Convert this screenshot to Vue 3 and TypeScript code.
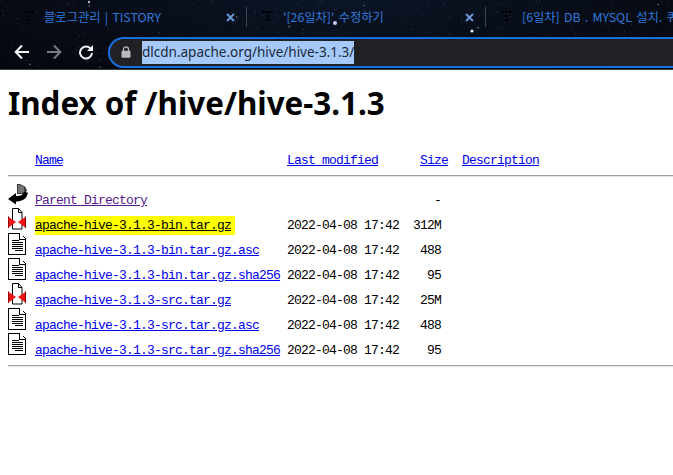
<script setup lang="ts">
interface Star { x: number; y: number; r: number; o: number; c: string }
interface Row { name: string; date: string; size: string; icon: 'back' | 'zip' | 'text'; hl?: boolean; visited?: boolean }

let seed = 4217
const rnd = (): number => {
  seed = (seed * 16807) % 2147483647
  return seed / 2147483647
}
const stars: Star[] = []
for (let i = 0; i < 300; i++) {
  const big = rnd() > 0.95
  stars.push({
    x: rnd() * 673,
    y: rnd() * 70,
    r: big ? 0.8 : 0.5,
    o: big ? 0.5 : 0.1 + rnd() * 0.28,
    c: rnd() > 0.7 ? '#a9c4e8' : '#e8e8e8'
  })
}

const tabs = [
  { title: '블로그관리 | TISTORY', closable: true },
  { title: "'[26일차]' 수정하기", closable: true },
  { title: '[6일차] DB . MYSQL 설치. 쿼리', closable: false }
]

const rows: Row[] = [
  { name: 'Parent Directory', date: '', size: '-', icon: 'back', visited: true },
  { name: 'apache-hive-3.1.3-bin.tar.gz', date: '2022-04-08 17:42', size: '312M', icon: 'zip', hl: true },
  { name: 'apache-hive-3.1.3-bin.tar.gz.asc', date: '2022-04-08 17:42', size: '488', icon: 'text' },
  { name: 'apache-hive-3.1.3-bin.tar.gz.sha256', date: '2022-04-08 17:42', size: '95', icon: 'text' },
  { name: 'apache-hive-3.1.3-src.tar.gz', date: '2022-04-08 17:42', size: '25M', icon: 'zip' },
  { name: 'apache-hive-3.1.3-src.tar.gz.asc', date: '2022-04-08 17:42', size: '488', icon: 'text' },
  { name: 'apache-hive-3.1.3-src.tar.gz.sha256', date: '2022-04-08 17:42', size: '95', icon: 'text' }
]
</script>

<template>
  <div class="page">
    <header class="chrome">
      <svg class="sky" width="673" height="70" viewBox="0 0 673 70" aria-hidden="true">
        <circle v-for="(s, i) in stars" :key="i" :cx="s.x" :cy="s.y" :r="s.r" :fill="s.c" :opacity="s.o" />
        <circle cx="335" cy="23" r="2" fill="#c9c4ff" />
        <circle cx="472" cy="31" r="1.6" fill="#e4efff" />
        <circle cx="89" cy="2" r="1.2" fill="#bbb" />
      </svg>

      <div class="tabs">
        <div v-for="t in tabs" :key="t.title" class="tab">
          <svg class="favicon" width="14" height="12" viewBox="0 0 14 12" aria-hidden="true">
            <g fill="#000">
              <rect x="0" y="0" width="3" height="2" /><rect x="4" y="0" width="3" height="2" /><rect x="8" y="0" width="3" height="2" />
              <rect x="4" y="4" width="3" height="2" /><rect x="4" y="8" width="3" height="2" />
            </g>
          </svg>
          <span class="tab-title">{{ t.title }}</span>
          <svg v-if="t.closable" class="close" width="9" height="9" viewBox="0 0 9 9" aria-hidden="true">
            <path d="M1 1l7 7M8 1l-7 7" stroke="#6c9bd8" stroke-width="1.8" fill="none" />
          </svg>
        </div>
      </div>

      <div class="toolbar">
        <svg class="nav" width="16" height="16" viewBox="0 0 16 16" aria-hidden="true">
          <path d="M15 8H2M8 1.5L1.7 8 8 14.5" stroke="#f1f3f4" stroke-width="2" fill="none" />
        </svg>
        <svg class="nav" width="16" height="16" viewBox="0 0 16 16" aria-hidden="true">
          <path d="M1 8h13M8 1.5L14.3 8 8 14.5" stroke="#767a80" stroke-width="2" fill="none" />
        </svg>
        <svg class="nav" width="16" height="16" viewBox="0 0 16 16" aria-hidden="true">
          <path d="M13 5.200A6 6 0 1 0 14 9" stroke="#f1f3f4" stroke-width="2" fill="none" />
          <path d="M15 1v6H9z" fill="#f1f3f4" />
        </svg>
        <div class="omnibox">
          <svg class="lock" width="10" height="12" viewBox="0 0 10 12" aria-hidden="true">
            <path d="M2.500 5V3.400a2.500 2.500 0 0 1 5 0V5" stroke="#b8babd" stroke-width="1.300" fill="none" />
            <rect x="0.500" y="4.800" width="9" height="7" rx="1" fill="#b8babd" />
          </svg>
          <span class="url">dlcdn.apache.org/hive/hive-3.1.3/</span>
        </div>
      </div>
    </header>

    <main class="content">
      <h1>Index of /hive/hive-3.1.3</h1>

      <div class="listing head">
        <span class="ic"></span>
        <a class="lnk" href="#">Name</a>
        <a class="lnk" href="#">Last modified</a>
        <a class="lnk size" href="#">Size</a>
        <a class="lnk" href="#">Description</a>
      </div>
      <hr />

      <div v-for="r in rows" :key="r.name" class="listing row">
        <span class="ic">
          <svg v-if="r.icon === 'back'" class="back" width="20" height="22" viewBox="0 0 20 22" aria-hidden="true">
            <path d="M9 0h3l5 2.500 2 4-2 3.500H9z" fill="#3c3c3c" />
            <path d="M11 1v8M13 1.500v7.500M15 2.500v6" stroke="#c8c8c8" stroke-width="0.800" />
            <path d="M19.800 8.500C19.500 15 13.500 17.500 8 17.500V20.500L0 15 8 9V12C12 12.500 15 11 16 8z" fill="#000" />
          </svg>
          <svg v-else-if="r.icon === 'zip'" width="20" height="22" viewBox="0 0 20 22" aria-hidden="true">
            <path d="M4.500.5h6l3.500 4v16.500H4.500z" fill="#fff" stroke="#000" />
            <path d="M10.500.5v4h3.500" fill="none" stroke="#000" />
            <path d="M0 8.500L8 14 0 20zM18 8.500L10 14l8 6z" fill="#f01414" />
            <path d="M.5 8.500v11.500M17.500 8.500v11.500" stroke="#8a0000" />
          </svg>
          <svg v-else width="20" height="22" viewBox="0 0 20 22" shape-rendering="crispEdges" aria-hidden="true">
            <path d="M.5.5h11l6 5.500v15.500H.5z" fill="#fff" stroke="#000" />
            <path d="M11.500.5v5.500h6" fill="#fff" stroke="#000" />
            <path d="M4 7h7v1H4zM4 9h11v1H4zM4 11h11v1H4zM4 13h11v1H4zM4 15h11v1H4zM7 17h8v1H7z" fill="#000" />
          </svg>
        </span>
        <span class="name-cell">
          <a class="lnk" :class="{ hl: r.hl, visited: r.visited }" href="#">{{ r.name }}</a>
        </span>
        <span>{{ r.date }}</span>
        <span class="size">{{ r.size }}</span>
        <span></span>
      </div>
      <hr class="end" />
    </main>
  </div>
</template>

<style scoped>
.page {
  width: 673px;
  height: 475px;
  overflow: hidden;
  background: #fff;
}
.chrome {
  position: relative;
  height: 70px;
  background: radial-gradient(ellipse at 50% 0%, #0b1526 0%, #070c16 60%, #04070d 100%);
  border-bottom: 1px solid #3a3b3d;
  box-sizing: border-box;
  font-family: "Noto Sans CJK KR", "Noto Sans", sans-serif;
}
.sky {
  position: absolute;
  left: 0;
  top: 0;
}
.tabs {
  position: relative;
  display: flex;
  height: 34px;
  padding-left: 8px;
}
.tab {
  width: 239px;
  flex: none;
  box-sizing: border-box;
  display: flex;
  align-items: center;
  padding: 0 11px 0 15px;
  border-right: 1px solid #3b4656;
  height: 20px;
  margin-top: 7px;
  position: relative;
}
.tab:last-child {
  border-right: 0;
}
.favicon {
  flex: none;
  margin-right: 7px;
}
.tab-title {
  flex: 1;
  font-size: 12.300px;
  word-spacing: 1.500px;
  line-height: 20px;
  color: #2f79dc;
  white-space: nowrap;
  overflow: hidden;
}
.close {
  flex: none;
}
.toolbar {
  position: relative;
  display: flex;
  align-items: center;
  height: 36px;
  padding-left: 14px;
}
.nav {
  flex: none;
  margin-right: 16px;
}
.omnibox {
  flex: none;
  width: 600px;
  height: 31px;
  margin-left: -2px;
  box-sizing: border-box;
  border: 2px solid #1a6fe0;
  border-radius: 16px 0 0 16px;
  background: #202124;
  display: flex;
  align-items: center;
  padding-left: 11px;
}
.lock {
  flex: none;
  margin-right: 11px;
}
.url {
  background: #a5c9f8;
  color: #1d2a3a;
  font-family: "Noto Sans", sans-serif;
  font-size: 13.500px;
  line-height: 23px;
  white-space: nowrap;
}
.content {
  padding-left: 8px;
  font-family: "Liberation Mono", monospace;
  font-size: 13px;
  letter-spacing: -0.800px;
  color: #000;
}
h1 {
  margin: 0;
  padding-top: 13px;
  height: 63px;
  font-family: "Noto Sans", sans-serif;
  font-size: 31.350px;
  line-height: 40px;
  font-weight: 700;
  letter-spacing: 0;
  color: #000;
  white-space: nowrap;
}
.listing {
  display: grid;
  grid-template-columns: 27px 252px 112px 42px 1fr;
  white-space: nowrap;
}
.head {
  height: 23px;
  margin-top: 6px;
  align-items: end;
}
.row {
  height: 25px;
  align-items: start;
}
.row > span:not(.ic) {
  padding-top: 10px;
  line-height: 16px;
}
.head .lnk {
  line-height: 16px;
  margin-bottom: 6px;
}
.head .lnk.size {
  margin-right: -7px;
}
.head .lnk:last-child {
  margin-left: 21px;
}
.ic {
  display: block;
  height: 22px;
}
.ic svg {
  display: block;
}
.ic svg.back {
  margin-top: 1px;
}
.size {
  text-align: right;
}
.name-cell {
  display: block;
}
.lnk {
  color: #0000ee;
  text-decoration: underline;
}
.lnk.visited {
  color: #551a8b;
}
.lnk.hl {
  color: #000;
  background: #ffff00;
  padding: 2px 4px 2px 0;
}
hr {
  margin: 0 0 6px;
  height: 0;
  border: 0;
  border-top: 1px solid #a3a3a3;
  border-bottom: 1px solid #e6e6e6;
}
hr.end {
  margin-top: 7px;
}
</style>
